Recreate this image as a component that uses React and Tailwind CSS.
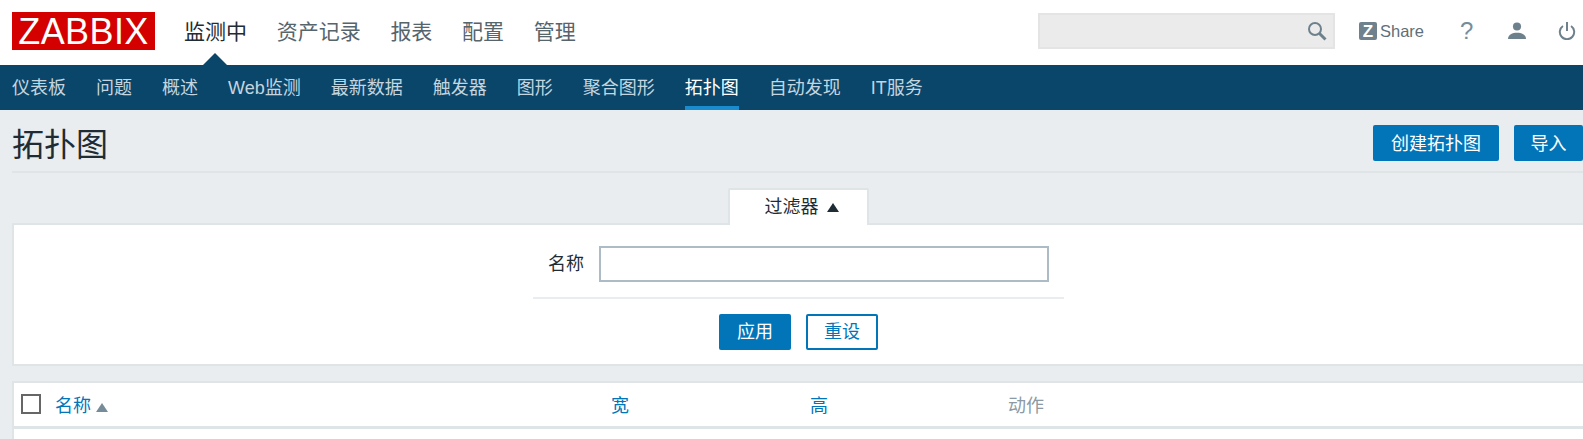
const CJK = { fontFamily: '"Liberation Sans","Noto Sans CJK SC",sans-serif' };

const top = ["资产记录", "报表", "配置", "管理"];
const sub = ["仪表板", "问题", "概述", "Web监测", "最新数据", "触发器", "图形", "聚合图形", "拓扑图", "自动发现", "IT服务"];

function Tri({ className }) {
  return (
    <svg viewBox="0 0 12 9" className={className}>
      <path d="M6 0 12 9H0Z" fill="currentColor" />
    </svg>
  );
}

export default function App() {
  return (
    <div style={CJK} className="h-[439px] w-[1583px] overflow-hidden bg-[#e9edf0] text-[18px] text-[#1f2c33]">
      <header className="flex h-[65px] items-center bg-white pl-3">
        <div className="mb-[3px] flex h-[38px] w-[143px] items-center justify-center bg-[#d40000] pt-[1px] text-[36px] leading-none tracking-[0.4px] text-white">ZABBIX</div>
        <nav className="ml-[29px] flex h-full items-center gap-[29.7px] text-[21px] text-[#56646c]">
          <div className="relative flex h-full items-center text-[#1f2c33]">
            <span className="mb-[1px]">监测中</span>
            <span className="absolute bottom-0 left-[19px] h-0 w-0 border-x-[12px] border-b-[12px] border-x-transparent border-b-[#0a466a]" />
          </div>
          {top.map((t) => <span key={t} className="mb-[1px]">{t}</span>)}
        </nav>
        <div className="ml-auto mb-[3px] flex h-[36px] w-[297px] items-center justify-end border-2 border-[#e4e4e4] bg-[#ebebeb] pr-[6px]">
          <svg viewBox="0 0 20 20" className="h-[20px] w-[20px] text-[#6d818d]" fill="none" stroke="currentColor">
            <circle cx="8" cy="8" r="6" strokeWidth="2" />
            <path d="M12.5 12.5 18.5 18.5" strokeWidth="3" />
          </svg>
        </div>
        <div className="ml-[24px] mb-[3px] flex w-[224px] shrink-0 items-center text-[16px] text-[#5f6f78]">
          <span className="flex h-[18px] w-[18px] items-center justify-center rounded-[2px] bg-[#6f818d] text-[17px] font-bold leading-none text-white">Z</span>
          <span className="ml-[3px] text-[16.5px]">Share</span>
          <span className="ml-[36px] text-[24px] leading-none text-[#768d99]">?</span>
          <svg viewBox="0 0 20 20" className="ml-[35px] h-[18px] w-[18px] text-[#6d818d]" fill="currentColor">
            <circle cx="10" cy="5" r="4.5" />
            <path d="M0 19c0-5 5-7 10-7s10 2 10 7Z" />
          </svg>
          <svg viewBox="0 0 20 20" className="ml-[32px] h-[18px] w-[18px] text-[#6d818d]" fill="none" stroke="currentColor" strokeWidth="2.2">
            <path d="M5.5 4.5a8 8 0 1 0 9 0" />
            <path d="M10 0v10" />
          </svg>
        </div>
      </header>

      <nav className="flex h-[45px] items-center gap-[30px] bg-[#0a466a] pl-3 pt-[2px] text-[#c4d5df]">
        {sub.map((t) =>
          t === "拓扑图" ? (
            <span key={t} className="-mt-[2px] flex h-[45px] items-center border-b-[4px] border-[#1b8bd0] pt-[6px] text-white">{t}</span>
          ) : (
            <span key={t}>{t}</span>
          )
        )}
      </nav>

      <div className="ml-3 flex h-[63px] items-start border-b-2 border-[#dfe4e7] pt-[15px]">
        <h1 className="mt-[4px] text-[32px] font-normal leading-none">拓扑图</h1>
        <div className="ml-auto flex shrink-0 gap-[15px]">
          <button className="h-[36px] w-[126px] rounded-[2px] bg-[#0275b8] pt-[2px] text-white">创建拓扑图</button>
          <button className="h-[36px] w-[69px] rounded-[2px] bg-[#0275b8] pt-[2px] text-white">导入</button>
        </div>
      </div>

      <section className="ml-3 mt-[15px]">
        <div className="relative z-10 ml-[716px] flex h-[37px] w-[141px] items-center justify-center gap-[8px] rounded-t-[2px] border-x-2 border-t-2 border-[#dfe4e7] bg-white pl-[6px]">
          <span>过滤器</span>
          <Tri className="h-[9px] w-[12px] text-[#1f2c33]" />
        </div>
        <div className="-mt-[2px] flex h-[143px] flex-col border-y-2 border-l-2 border-[#dfe4e7] bg-white">
          <div className="ml-[519px] mt-[21px] flex w-[531px] flex-col">
            <div className="flex items-center border-b-2 border-[#e9edf0] pb-[15px]">
              <label className="ml-[15px] w-[51px]">名称</label>
              <input className="h-[36px] w-[450px] border-2 border-[#acbbc4] bg-white" />
            </div>
            <div className="mt-[15px] flex justify-center gap-[15px]">
              <button className="h-[36px] w-[72px] rounded-[2px] bg-[#0275b8] pt-[1px] text-white">应用</button>
              <button className="h-[36px] w-[72px] rounded-[2px] border-2 border-[#0275b8] bg-white pt-[1px] text-[#0275b8]">重设</button>
            </div>
          </div>
        </div>
      </section>

      <section className="ml-3 mt-[15px] h-[60px] border-l-2 border-t-2 border-[#dfe4e7] bg-white">
        <div className="flex h-[46px] items-center border-b-[3px] border-[#dfe4e7] text-[#0275b8]">
          <span className="mb-[2px] ml-[7px] h-[20px] w-[20px] border-2 border-[#666666]" />
          <span className="ml-[14px] mt-[3px]">名称</span>
          <Tri className="ml-[5px] mt-[6px] h-[9px] w-[12px] text-[#768d99]" />
          <span className="ml-[503px] mt-[3px]">宽</span>
          <span className="ml-[181px] mt-[3px]">高</span>
          <span className="ml-[180px] mt-[3px] text-[#8c9aa3]">动作</span>
        </div>
      </section>
    </div>
  );
}
